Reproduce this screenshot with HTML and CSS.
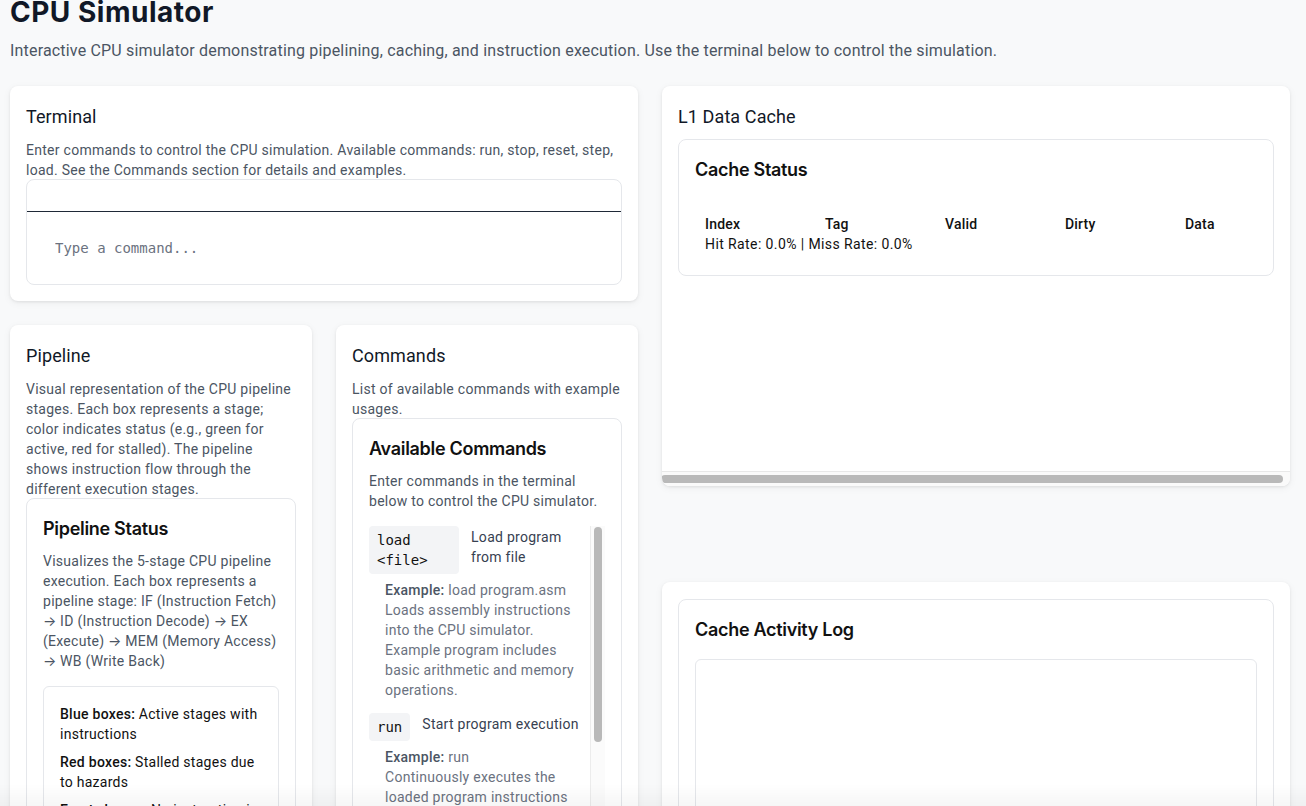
FILE: index.html
```html
<!DOCTYPE html>
<html lang="en">
<head>
<meta charset="utf-8">
<title>CPU Simulator</title>
<link rel="stylesheet" href="styles.css">
</head>
<body>
<div class="page">
  <header class="page-head">
    <h1 class="page-title">CPU Simulator</h1>
    <p class="page-desc">Interactive CPU simulator demonstrating pipelining, caching, and instruction execution. Use the terminal below to control the simulation.</p>
  </header>

  <div class="layout">
    <div class="col-left">
      <section class="card">
        <h2 class="card-title">Terminal</h2>
        <p class="card-desc">Enter commands to control the CPU simulation. Available commands: run, stop, reset, step, load. See the Commands section for details and examples.</p>
        <div class="terminal">
          <div class="terminal-output"></div>
          <div class="terminal-input-wrap">
            <input class="terminal-input" type="text" placeholder="Type a command...">
          </div>
        </div>
      </section>

      <div class="split">
        <section class="card">
          <h2 class="card-title">Pipeline</h2>
          <p class="card-desc">Visual representation of the CPU pipeline stages. Each box represents a stage; color indicates status (e.g., green for active, red for stalled). The pipeline shows instruction flow through the different execution stages.</p>
          <div class="panel">
            <h3 class="panel-title">Pipeline Status</h3>
            <p class="panel-desc">Visualizes the 5-stage CPU pipeline execution. Each box represents a pipeline stage: IF (Instruction Fetch) <span class="arrow">→</span> ID (Instruction Decode) <span class="arrow">→</span> EX (Execute) <span class="arrow">→</span> MEM (Memory Access) <span class="arrow">→</span> WB (Write Back)</p>
            <div class="legend">
              <p class="legend-item"><span class="legend-key">Blue boxes:</span> Active stages with instructions</p>
              <p class="legend-item"><span class="legend-key">Red boxes:</span> Stalled stages due to hazards</p>
              <p class="legend-item"><span class="legend-key">Empty boxes:</span> No instruction in the stage</p>
              <p class="legend-item"><span class="legend-key">Arrows:</span> Instruction flow direction</p>
            </div>
          </div>
        </section>

        <section class="card">
          <h2 class="card-title">Commands</h2>
          <p class="card-desc">List of available commands with example usages.</p>
          <div class="panel">
            <h3 class="panel-title">Available Commands</h3>
            <p class="panel-desc">Enter commands in the terminal below to control the CPU simulator.</p>
            <div class="cmd-list">
              <div class="cmd-items">
                <div class="cmd">
                  <div class="cmd-row">
                    <code class="cmd-code">load &lt;file&gt;</code>
                    <span class="cmd-summary">Load program from file</span>
                  </div>
                  <div class="cmd-detail">
                    <div><span class="cmd-label">Example:</span> load program.asm</div>
                    <div>Loads assembly instructions into the CPU simulator. Example program includes basic arithmetic and memory operations.</div>
                  </div>
                </div>
                <div class="cmd">
                  <div class="cmd-row">
                    <code class="cmd-code">run</code>
                    <span class="cmd-summary">Start program execution</span>
                  </div>
                  <div class="cmd-detail">
                    <div><span class="cmd-label">Example:</span> run</div>
                    <div>Continuously executes the loaded program instructions until stopped or finished.</div>
                  </div>
                </div>
                <div class="cmd">
                  <div class="cmd-row">
                    <code class="cmd-code">stop</code>
                    <span class="cmd-summary">Pause program execution</span>
                  </div>
                  <div class="cmd-detail">
                    <div><span class="cmd-label">Example:</span> stop</div>
                    <div>Halts the running program at the current cycle.</div>
                  </div>
                </div>
              </div>
              <div class="vscroll" aria-hidden="true"><div class="vscroll-thumb"></div></div>
            </div>
          </div>
        </section>
      </div>
    </div>

    <div class="col-right">
      <section class="card cache-card">
        <div class="cache-content">
          <h2 class="card-title">L1 Data Cache</h2>
          <div class="panel">
            <h3 class="panel-title">Cache Status</h3>
            <table class="cache-table">
              <thead>
                <tr><th>Index</th><th>Tag</th><th>Valid</th><th>Dirty</th><th>Data</th></tr>
              </thead>
            </table>
            <p class="cache-stats">Hit Rate: 0.0% | Miss Rate: 0.0%</p>
          </div>
        </div>
        <div class="hscroll" aria-hidden="true"><div class="hscroll-thumb"></div></div>
      </section>

      <section class="card log-card">
        <div class="panel">
          <h3 class="panel-title">Cache Activity Log</h3>
          <div class="log-box"></div>
        </div>
      </section>
    </div>
  </div>
</div>
<div class="bottom-fade"></div>
</body>
</html>
```

FILE: styles.css
```css
* { box-sizing: border-box; }

body {
  margin: 0;
  background: #f8f9fa;
  font-family: Roboto, "Liberation Sans", sans-serif;
  color: #111827;
}

.page {
  padding: 0 16px 40px 10px;
}

.page-title {
  margin: -4px 0 0;
  font-family: Inter, Roboto, sans-serif;
  font-size: 28px;
  line-height: 32px;
  font-weight: 700;
  letter-spacing: 0.5px;
  color: #111827;
}

.page-desc {
  margin: 11px 0 0;
  font-size: 16px;
  line-height: 24px;
  letter-spacing: 0.18px;
  color: #4b5563;
}

.layout {
  display: grid;
  grid-template-columns: 628px 628px;
  gap: 24px;
  margin-top: 23px;
  align-items: start;
}

.col-left {
  display: flex;
  flex-direction: column;
  gap: 24px;
}

.split {
  display: grid;
  grid-template-columns: 1fr 1fr;
  gap: 24px;
  align-items: start;
}

.card {
  background: #fff;
  border-radius: 8px;
  padding: 17px 16px 16px;
  box-shadow: 0 1px 3px rgba(0,0,0,0.08), 0 2px 8px rgba(0,0,0,0.05);
}

.card-title {
  margin: 0;
  font-size: 18px;
  line-height: 28px;
  font-weight: 400;
  letter-spacing: 0.1px;
  color: #111827;
}

.card-desc {
  margin: 9px 0 -1px;
  font-size: 14px;
  line-height: 20px;
  letter-spacing: 0.27px;
  color: #4b5563;
}

/* Terminal */
.terminal {
  border: 1px solid #e5e7eb;
  border-radius: 8px;
  overflow: hidden;
}

.terminal-output {
  height: 32px;
  border-bottom: 1px solid #1f2937;
}

.terminal-input-wrap {
  padding: 16px;
}

.terminal-input {
  display: block;
  width: 100%;
  border: none;
  outline: none;
  background: transparent;
  padding: 8px 12px;
  font-family: "DejaVu Sans Mono", "Liberation Mono", monospace;
  font-size: 14px;
  line-height: 24px;
  color: #111827;
}

.terminal-input::placeholder { color: #6b7280; }

/* Panels */
.panel {
  border: 1px solid #e5e7eb;
  border-radius: 8px;
  padding: 16px;
  background: #fff;
}

.panel-title {
  margin: 0;
  font-family: Inter, Roboto, sans-serif;
  font-size: 18px;
  line-height: 28px;
  font-weight: 600;
  letter-spacing: -0.3px;
  color: #111;
}

.panel-desc {
  margin: 8px 0 0;
  font-size: 14px;
  line-height: 20px;
  letter-spacing: 0.27px;
  color: #4b5563;
}

.arrow {
  font-family: Inter, "DejaVu Sans", sans-serif;
  letter-spacing: 0;
}

.legend {
  margin-top: 15px;
  border: 1px solid #e5e7eb;
  border-radius: 6px;
  padding: 17px 16px 16px;
}

.legend-item {
  margin: 0 0 8px;
  font-size: 14px;
  line-height: 20px;
  letter-spacing: 0.27px;
  color: #111;
}

.legend-key { font-weight: 500; }

/* Commands */
.cmd-list {
  margin-top: 15px;
  display: flex;
  align-items: flex-start;
}

.cmd-items {
  flex: 1;
  min-width: 0;
  max-height: 400px;
  overflow: hidden;
}

.vscroll {
  flex: 0 0 15px;
  align-self: stretch;
  border-left: 1px solid #ececec;
  background: #fbfbfb;
  padding: 1px 3px 0 3px;
}

.vscroll-thumb {
  width: 8px;
  height: 215px;
  border-radius: 4px;
  background: #b9b9b9;
}

.cmd { margin-bottom: 13px; }

.cmd-row {
  display: flex;
  gap: 12px;
  align-items: flex-start;
}

.cmd-code {
  background: #f3f4f6;
  border-radius: 4px;
  padding: 4px 8px;
  font-family: "DejaVu Sans Mono", "Liberation Mono", monospace;
  font-size: 14px;
  line-height: 20px;
  color: #111;
}

.cmd-summary {
  padding-top: 1px;
  font-size: 14px;
  line-height: 20px;
  letter-spacing: 0.27px;
  color: #374151;
}

.cmd-detail {
  margin-top: 6px;
  padding-left: 16px;
  font-size: 14px;
  line-height: 20px;
  letter-spacing: 0.27px;
  color: #6b7280;
}

.cmd-label { font-weight: 500; color: #4b5563; }

/* Cache */
.cache-card {
  padding: 0;
  height: 400px;
  display: flex;
  flex-direction: column;
  overflow: hidden;
}

.cache-content {
  flex: 1;
  padding: 17px 16px 16px;
  overflow: hidden;
}

.cache-content .panel { margin-top: 8px; }

.cache-table {
  margin-top: 30px;
  border-collapse: collapse;
  table-layout: fixed;
  width: 560px;
}

.cache-table th {
  width: 120px;
  text-align: left;
  padding: 0 10px;
  font-size: 14px;
  line-height: 20px;
  font-weight: 500;
  letter-spacing: 0.2px;
  color: #111;
}

.cache-stats {
  margin: 0 0 5px;
  padding-left: 10px;
  font-size: 14px;
  line-height: 20px;
  letter-spacing: 0.4px;
  color: #111;
}

.hscroll {
  flex: 0 0 15px;
  border-top: 1px solid #e8e8e8;
  background: #fafafa;
  padding: 3px 7px 0 0;
}

.hscroll-thumb {
  height: 8px;
  margin-left: -1px;
  border-radius: 4px;
  background: #b9b9b9;
}

.log-card {
  margin-top: 96px;
}

.log-box {
  margin-top: 15px;
  height: 320px;
  border: 1px solid #e5e7eb;
  border-radius: 6px;
}

.bottom-fade {
  position: fixed;
  left: 0;
  right: 0;
  bottom: 0;
  height: 22px;
  background: linear-gradient(to bottom, rgba(0,0,0,0), rgba(0,0,0,0.035));
  pointer-events: none;
}
```
